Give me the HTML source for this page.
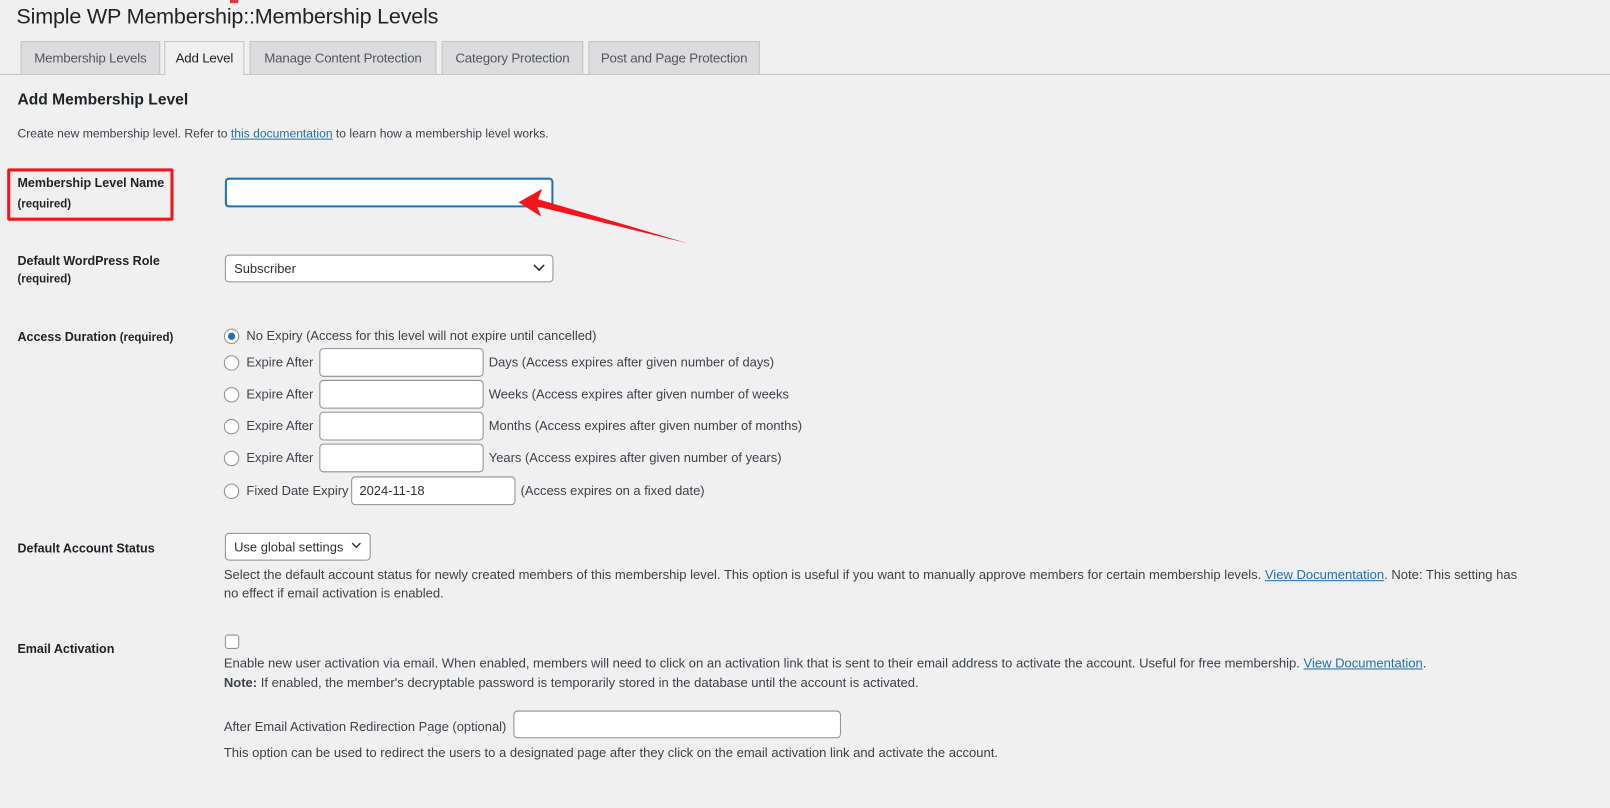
<!DOCTYPE html>
<html><head><meta charset="utf-8">
<style>
*{box-sizing:border-box;margin:0;padding:0}
body{width:1610px;height:787px;background:#f0f0f1;font-family:"Liberation Sans",sans-serif;color:#3c434a;font-size:12px;position:relative;overflow:hidden}
#w{position:absolute;left:0;top:0;width:1568px;height:766px;transform:scale(1.0268);transform-origin:0 0}
.a{position:absolute;white-space:nowrap;line-height:16px}
.t{font-size:12.6px}
.d{font-size:12.7px}
.lbl{font-weight:bold;color:#1d2327;font-size:12.2px}
.in{position:absolute;background:#fff;border:1px solid #8c8f94;border-radius:4px}
.tab{position:absolute;top:40px;height:32px;background:#dcdcde;border:1px solid #c3c4c7;border-bottom:none;font-size:13px;color:#50575e;line-height:32px;text-align:center;letter-spacing:-0.2px}
.r{position:absolute;width:15px;height:15px;border:1px solid #8c8f94;border-radius:50%;background:#fff}
a{color:#2271b1;text-decoration:underline}
</style></head><body><div id="w">
<div class="a" style="left:16px;top:4px;font-size:21px;line-height:26px;color:#1d2327;letter-spacing:-0.2px">Simple WP Membership::Membership Levels</div>
<div style="position:absolute;left:224px;top:0;width:8px;height:3px;background:#e33"></div>
<div style="position:absolute;left:0;top:72px;width:1610px;height:1px;background:#c3c4c7"></div>
<div class="tab" style="left:20px;width:136px">Membership Levels</div>
<div class="tab" style="left:160px;width:78px;background:#f0f0f1;color:#1d2327;height:33px">Add Level</div>
<div class="tab" style="left:243px;width:182px">Manage Content Protection</div>
<div class="tab" style="left:430px;width:138px">Category Protection</div>
<div class="tab" style="left:573px;width:167px">Post and Page Protection</div>

<div class="a" style="left:17px;top:89px;font-size:15.2px;font-weight:bold;color:#1d2327;line-height:18px">Add Membership Level</div>
<div class="a" style="left:17px;top:122px;font-size:11.8px">Create new membership level. Refer to <a>this documentation</a> to learn how a membership level works.</div>

<div style="position:absolute;left:7px;top:164px;width:162px;height:51px;border:3px solid #f5141a;border-radius:2px"></div>
<div class="a lbl" style="left:17px;top:170px">Membership Level Name</div>
<div class="a lbl" style="left:17px;top:191px;font-size:11.2px">(required)</div>
<div class="in" style="left:219px;top:173px;width:320px;height:29px;border:2px solid #2271b1;border-radius:4px"></div>
<svg style="position:absolute;left:0;top:0" width="1610" height="787"><polygon points="505,197 528,184 524,194 670,237 523,201 527,211" fill="#f5141a"/></svg>

<div class="a lbl" style="left:17px;top:246px">Default WordPress Role</div>
<div class="a lbl" style="left:17px;top:264px;font-size:11.2px">(required)</div>
<div class="in" style="left:219px;top:248px;width:320px;height:27px"></div>
<div class="a t" style="left:228px;top:254px;color:#2c3338">Subscriber</div>
<svg style="position:absolute;left:519px;top:256px" width="12" height="10"><path d="M1 2l5 5 5-5" stroke="#2c3338" stroke-width="1.6" fill="none"/></svg>

<div class="a lbl" style="left:17px;top:320px">Access Duration <span style="font-size:11.2px">(required)</span></div>

<div class="r" style="left:218px;top:320px"></div><div style="position:absolute;left:222px;top:324px;width:7px;height:7px;border-radius:50%;background:#2271b1"></div>
<div class="a t" style="left:240px;top:319px">No Expiry (Access for this level will not expire until cancelled)</div>

<div class="r" style="left:218px;top:346px"></div><div class="a t" style="left:240px;top:345px">Expire After</div>
<div class="in" style="left:311px;top:339px;width:160px;height:28px"></div><div class="a t" style="left:476px;top:345px">Days (Access expires after given number of days)</div>

<div class="r" style="left:218px;top:377px"></div><div class="a t" style="left:240px;top:376px">Expire After</div>
<div class="in" style="left:311px;top:370px;width:160px;height:28px"></div><div class="a t" style="left:476px;top:376px">Weeks (Access expires after given number of weeks</div>

<div class="r" style="left:218px;top:408px"></div><div class="a t" style="left:240px;top:407px">Expire After</div>
<div class="in" style="left:311px;top:401px;width:160px;height:28px"></div><div class="a t" style="left:476px;top:407px">Months (Access expires after given number of months)</div>

<div class="r" style="left:218px;top:439px"></div><div class="a t" style="left:240px;top:438px">Expire After</div>
<div class="in" style="left:311px;top:432px;width:160px;height:28px"></div><div class="a t" style="left:476px;top:438px">Years (Access expires after given number of years)</div>

<div class="r" style="left:218px;top:471px"></div><div class="a t" style="left:240px;top:470px">Fixed Date Expiry</div>
<div class="in" style="left:342px;top:464px;width:160px;height:28px"></div><div class="a t" style="left:350px;top:470px;color:#2c3338">2024-11-18</div>
<div class="a t" style="left:507px;top:470px">(Access expires on a fixed date)</div>

<div class="a lbl" style="left:17px;top:526px">Default Account Status</div>
<div class="in" style="left:219px;top:519px;width:142px;height:27px"></div>
<div class="a t" style="left:228px;top:525px;color:#2c3338">Use global settings</div>
<svg style="position:absolute;left:342px;top:527px" width="10" height="8"><path d="M1 2l4 4 4-4" stroke="#2c3338" stroke-width="1.4" fill="none"/></svg>
<div class="a d" style="left:218px;top:552px">Select the default account status for newly created members of this membership level. This option is useful if you want to manually approve members for certain membership levels. <a>View Documentation</a>. Note: This setting has</div>
<div class="a d" style="left:218px;top:570px">no effect if email activation is enabled.</div>

<div class="a lbl" style="left:17px;top:624px">Email Activation</div>
<div style="position:absolute;left:219px;top:618px;width:14px;height:14px;border:1px solid #8c8f94;border-radius:3px;background:#fff"></div>
<div class="a d" style="left:218px;top:638px">Enable new user activation via email. When enabled, members will need to click on an activation link that is sent to their email address to activate the account. Useful for free membership. <a>View Documentation</a>.</div>
<div class="a d" style="left:218px;top:657px"><b style="color:#3c434a">Note:</b> If enabled, the member's decryptable password is temporarily stored in the database until the account is activated.</div>

<div class="a t" style="left:218px;top:700px">After Email Activation Redirection Page (optional)</div>
<div class="in" style="left:500px;top:692px;width:319px;height:27px"></div>
<div class="a d" style="left:218px;top:725px">This option can be used to redirect the users to a designated page after they click on the email activation link and activate the account.</div>
</div></body></html>
